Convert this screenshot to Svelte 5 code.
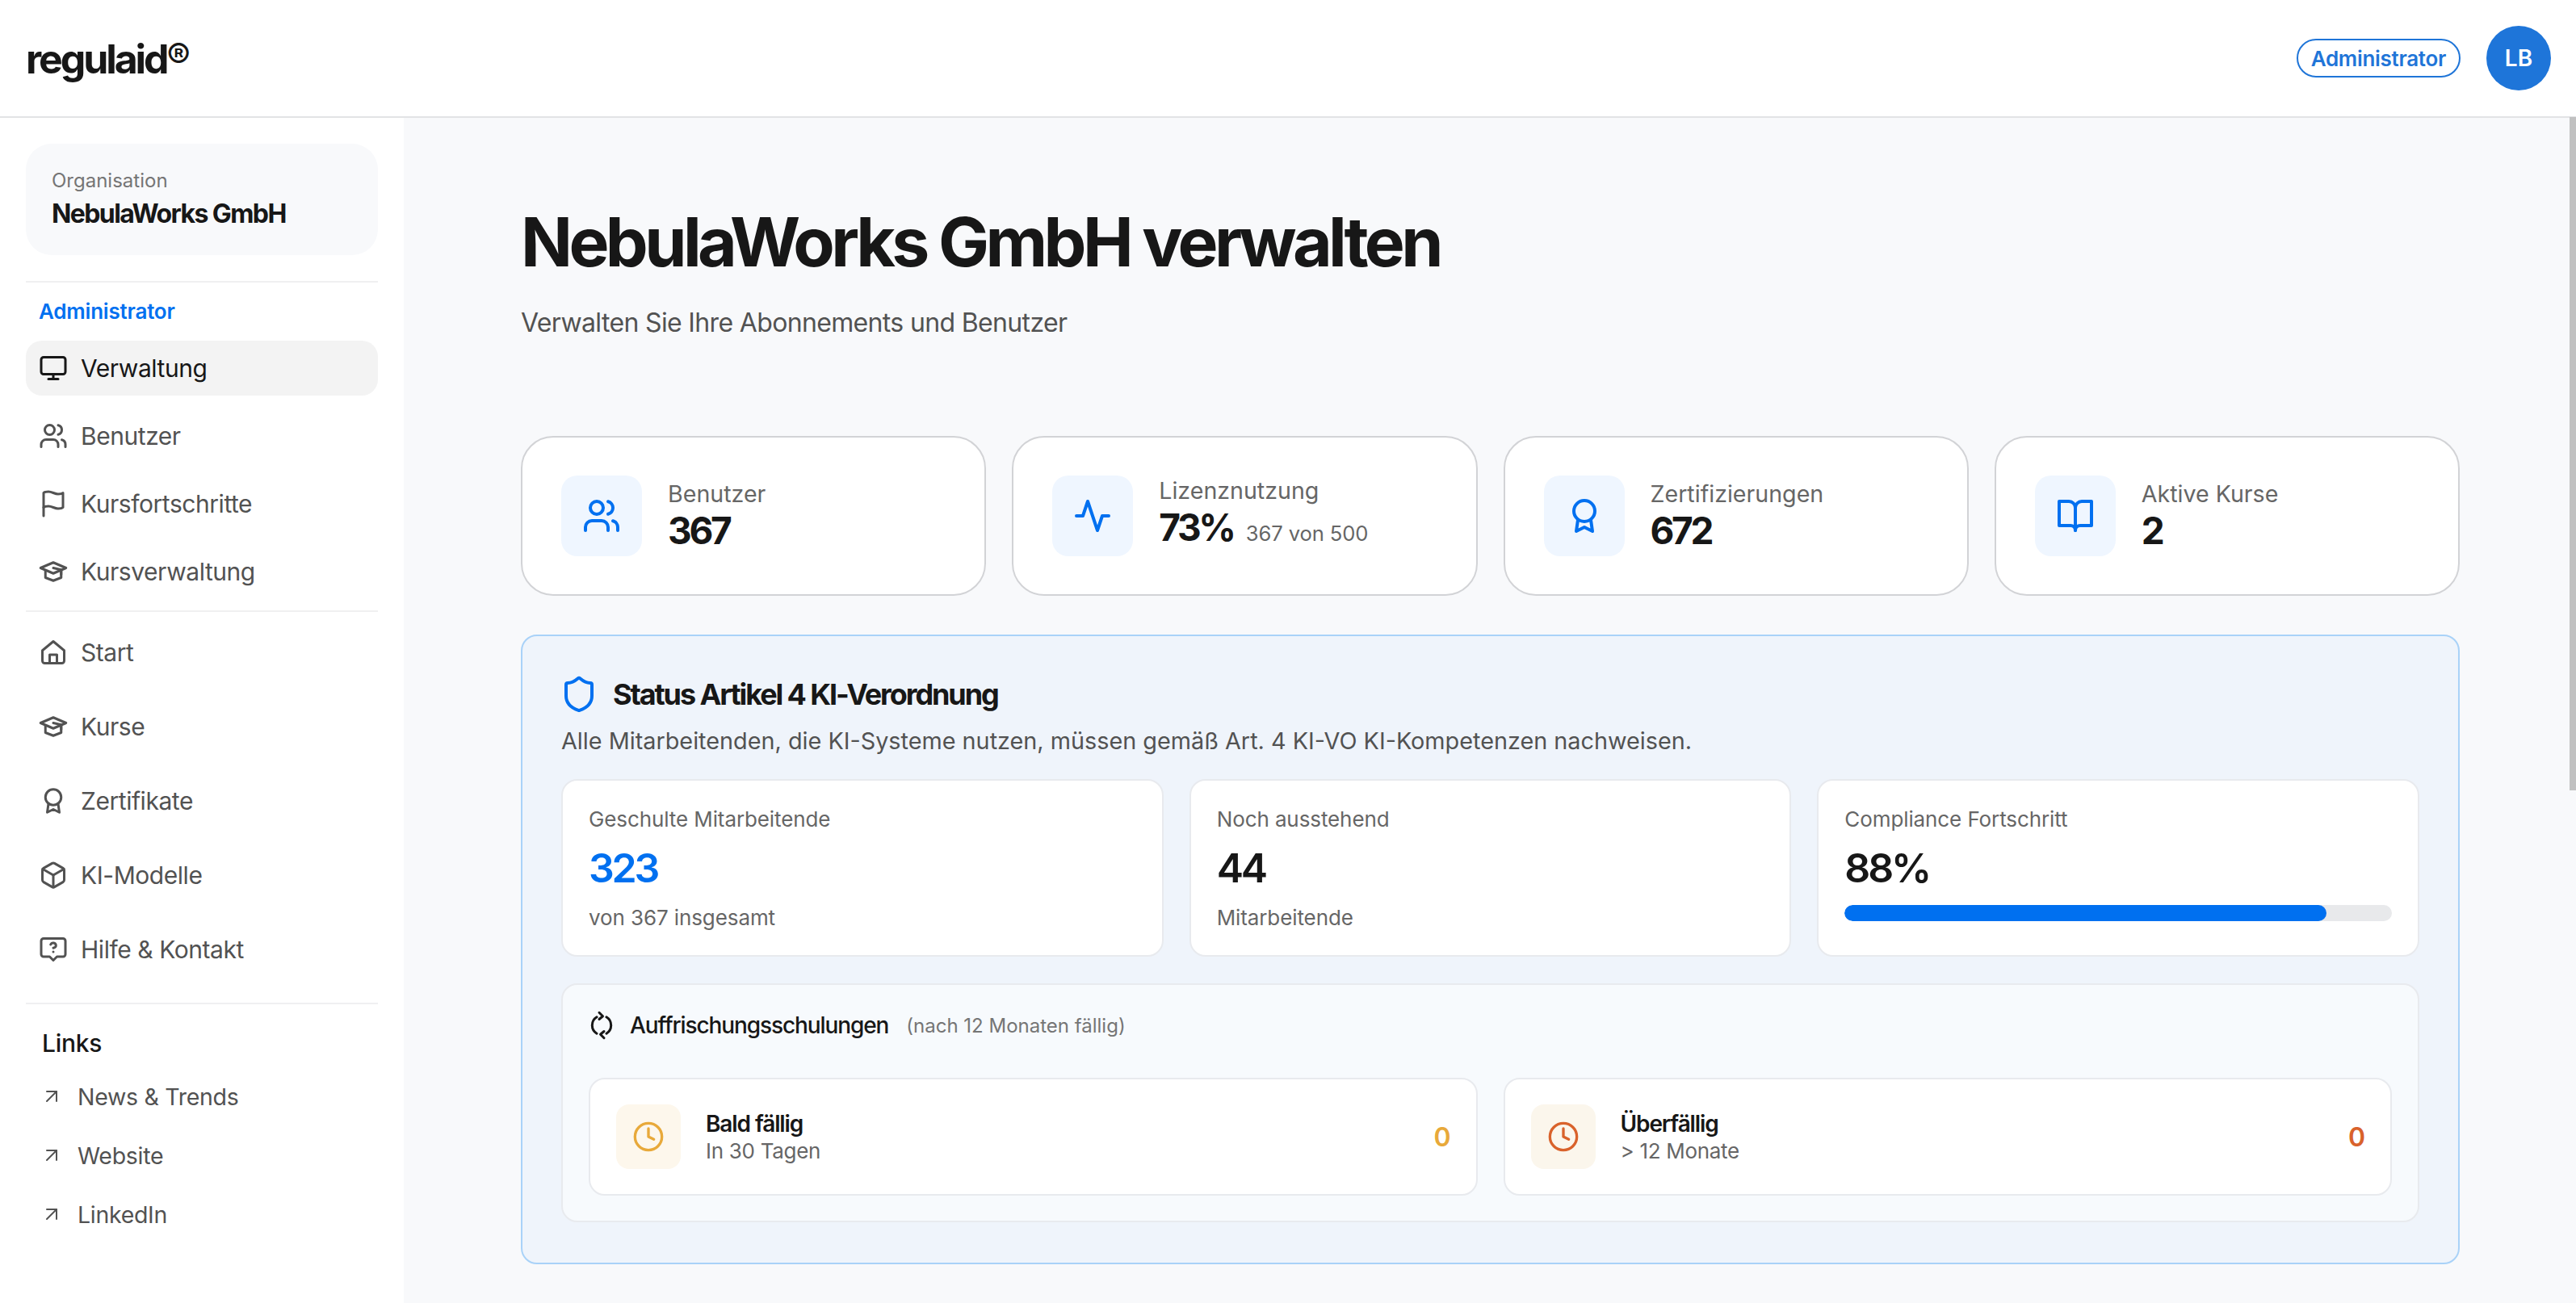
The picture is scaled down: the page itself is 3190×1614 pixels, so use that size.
<script>
  const icons = {
    monitor: ['M4 3h16a2 2 0 0 1 2 2v10a2 2 0 0 1-2 2H4a2 2 0 0 1-2-2V5a2 2 0 0 1 2-2z', 'M12 17v4', 'M8 21h8'],
    users: ['M16 21v-2a4 4 0 0 0-4-4H6a4 4 0 0 0-4 4v2', 'M13 7a4 4 0 1 1-8 0 4 4 0 0 1 8 0z', 'M22 21v-2a4 4 0 0 0-3-3.87', 'M16 3.13a4 4 0 0 1 0 7.75'],
    flag: ['M4 15s1-1 4-1 5 2 8 2 4-1 4-1V3s-1 1-4 1-5-2-8-2-4 1-4 1z', 'M4 22v-7'],
    cap: ['M12 4.5 22.5 9 12 13.5 1.5 9z', 'M5.5 11v6l6.5 2.5 6.5-2.5v-6', 'M12 9l6.5 1.5v4'],
    home: ['M3 10.5 12 3l9 7.5V19a2 2 0 0 1-2 2H5a2 2 0 0 1-2-2z', 'M9 21v-7h6v7'],
    award: ['M18.5 9a6.5 6.5 0 1 1-13 0 6.5 6.5 0 0 1 13 0z', 'M8 14.5 7 21.5l5-2.5 5 2.5-1-7'],
    box: ['M21 8a2 2 0 0 0-1-1.73l-7-4a2 2 0 0 0-2 0l-7 4A2 2 0 0 0 3 8v8a2 2 0 0 0 1 1.73l7 4a2 2 0 0 0 2 0l7-4A2 2 0 0 0 21 16Z', 'm3.3 7 8.7 5 8.7-5', 'M12 22V12'],
    help: ['M4 3h16a2 2 0 0 1 2 2v11a2 2 0 0 1-2 2h-5l-3 3-3-3H4a2 2 0 0 1-2-2V5a2 2 0 0 1 2-2z', 'M9.8 8a2.3 2.3 0 0 1 4.4.8c0 1.5-2.2 2-2.2 2', 'M12 14h.01'],
    arrow: ['M6 18 18 6', 'M6 6h12v12'],
    activity: ['M22 12h-4l-3 9L9 3l-3 9H2'],
    book: ['M2 3h6a4 4 0 0 1 4 4v14a3 3 0 0 0-3-3H2z', 'M22 3h-6a4 4 0 0 0-4 4v14a3 3 0 0 1 3-3h7z'],
    shield: ['M20 13c0 5-3.5 7.5-7.66 8.95a1 1 0 0 1-.67-.01C7.5 20.5 4 18 4 13V6a1 1 0 0 1 1-1c2 0 4.5-1.2 6.24-2.72a1.17 1.17 0 0 1 1.52 0C14.51 3.81 17 5 19 5a1 1 0 0 1 1 1z'],
    sync: ['M8 5.2A8 8 0 0 0 8 18.8', 'M16 18.8A8 8 0 0 0 16 5.2', 'M10 1.5 13 4.5 10 7', 'M14 22.5 11 19.5 14 17'],
    clock: ['M22 12a10 10 0 1 1-20 0 10 10 0 0 1 20 0z', 'M12 6v6l4 2']
  };

  const adminNav = [
    { label: 'Verwaltung', icon: 'monitor', active: true },
    { label: 'Benutzer', icon: 'users' },
    { label: 'Kursfortschritte', icon: 'flag' },
    { label: 'Kursverwaltung', icon: 'cap' }
  ];
  const mainNav = [
    { label: 'Start', icon: 'home' },
    { label: 'Kurse', icon: 'cap' },
    { label: 'Zertifikate', icon: 'award' },
    { label: 'KI-Modelle', icon: 'box' },
    { label: 'Hilfe & Kontakt', icon: 'help' }
  ];
  const links = ['News & Trends', 'Website', 'LinkedIn'];
  const stats = [
    { label: 'Benutzer', value: '367', icon: 'users' },
    { label: 'Lizenznutzung', value: '73%', note: '367 von 500', icon: 'activity' },
    { label: 'Zertifizierungen', value: '672', icon: 'award' },
    { label: 'Aktive Kurse', value: '2', icon: 'book' }
  ];
  const refreshers = [
    { title: 'Bald fällig', sub: 'In 30 Tagen', cls: 'amber' },
    { title: 'Überfällig', sub: '> 12 Monate', cls: 'red' }
  ];
</script>

{#snippet icon(name, size)}
  <svg width={size} height={size} viewBox="0 0 24 24" fill="none" stroke="currentColor" stroke-width="2" stroke-linecap="round" stroke-linejoin="round" aria-hidden="true">
    {#each icons[name] as d}<path {d} />{/each}
  </svg>
{/snippet}

<div class="shell">
  <header class="topbar">
    <div class="logo">regulaid<span class="reg">®</span></div>
    <div class="account">
      <span class="role">Administrator</span>
      <span class="avatar">LB</span>
    </div>
  </header>

  <div class="body">
    <aside class="sidebar">
      <div class="org">
        <div class="org-label">Organisation</div>
        <div class="org-name">NebulaWorks GmbH</div>
      </div>
      <hr class="rule first" />
      <div class="section-label">Administrator</div>
      <nav class="nav admin">
        {#each adminNav as item}
          <div class="nav-item" class:active={item.active}>
            {@render icon(item.icon, 36)}
            <span>{item.label}</span>
          </div>
        {/each}
      </nav>
      <hr class="rule second" />
      <nav class="nav primary">
        {#each mainNav as item}
          <div class="nav-item">
            {@render icon(item.icon, 36)}
            <span>{item.label}</span>
          </div>
        {/each}
      </nav>
      <hr class="rule third" />
      <div class="links-title">Links</div>
      <div class="links">
        {#each links as link}
          <div class="link">
            {@render icon('arrow', 24)}
            <span>{link}</span>
          </div>
        {/each}
      </div>
    </aside>

    <main class="main">
      <h1>NebulaWorks GmbH verwalten</h1>
      <p class="subtitle">Verwalten Sie Ihre Abonnements und Benutzer</p>

      <section class="stats">
        {#each stats as s}
          <div class="stat">
            <div class="stat-icon">{@render icon(s.icon, 48)}</div>
            <div class="stat-text">
              <div class="stat-label">{s.label}</div>
              <div class="stat-value">{s.value}{#if s.note}<small>{s.note}</small>{/if}</div>
            </div>
          </div>
        {/each}
      </section>

      <section class="panel">
        <div class="panel-head">
          {@render icon('shield', 48)}
          <h2>Status Artikel 4 KI-Verordnung</h2>
        </div>
        <p class="panel-desc">Alle Mitarbeitenden, die KI-Systeme nutzen, müssen gemäß Art. 4 KI-VO KI-Kompetenzen nachweisen.</p>

        <div class="metrics">
          <div class="metric">
            <div class="metric-label">Geschulte Mitarbeitende</div>
            <div class="metric-value blue">323</div>
            <div class="metric-note">von 367 insgesamt</div>
          </div>
          <div class="metric">
            <div class="metric-label">Noch ausstehend</div>
            <div class="metric-value">44</div>
            <div class="metric-note">Mitarbeitende</div>
          </div>
          <div class="metric">
            <div class="metric-label">Compliance Fortschritt</div>
            <div class="metric-value">88%</div>
            <div class="track"><div class="fill" style="width: 88%"></div></div>
          </div>
        </div>

        <div class="refresh">
          <div class="refresh-head">
            {@render icon('sync', 36)}
            <span class="refresh-title">Auffrischungsschulungen</span>
            <span class="refresh-note">(nach 12 Monaten fällig)</span>
          </div>
          <div class="refresh-grid">
            {#each refreshers as r}
              <div class="due {r.cls}">
                <div class="due-icon">{@render icon('clock', 40)}</div>
                <div class="due-text">
                  <div class="due-title">{r.title}</div>
                  <div class="due-sub">{r.sub}</div>
                </div>
                <div class="due-count">0</div>
              </div>
            {/each}
          </div>
        </div>
      </section>
    </main>
    <div class="scroll-thumb"></div>
  </div>
</div>

<style>
  :global(body) {
    margin: 0;
    background: #f8f9fb;
    font-family: Inter, "Liberation Sans", sans-serif;
    color: #171717;
    overflow: hidden;
  }

  .shell { height: 1614px; display: flex; flex-direction: column; }

  .topbar {
    height: 144px;
    flex-shrink: 0;
    box-sizing: content-box;
    background: #fff;
    border-bottom: 2px solid #e2e3e5;
    display: flex;
    align-items: center;
    justify-content: space-between;
    padding: 0 31px 0 32px;
  }
  .logo { font-size: 50px; font-weight: 700; letter-spacing: -3.1px; }
  .reg { font-weight: 500; font-size: 44px; letter-spacing: 0; vertical-align: 6px; }

  .account { display: flex; align-items: center; gap: 32px; }
  .role {
    height: 48px;
    box-sizing: border-box;
    padding: 0 16px;
    display: flex;
    align-items: center;
    border: 2px solid #1f75d8;
    border-radius: 24px;
    color: #1f75d8;
    font-size: 26px;
    font-weight: 600;
    letter-spacing: -0.3px;
  }
  .avatar {
    width: 80px;
    height: 80px;
    border-radius: 50%;
    background: #1e75d9;
    color: #fff;
    display: flex;
    align-items: center;
    justify-content: center;
    font-size: 28px;
    font-weight: 600;
  }

  .body { flex: 1; min-height: 0; display: flex; position: relative; }

  .sidebar {
    width: 500px;
    flex-shrink: 0;
    box-sizing: border-box;
    background: #fff;
    padding: 32px 32px 0;
  }
  .org {
    height: 138px;
    box-sizing: border-box;
    background: #f8f9fb;
    border-radius: 32px;
    padding: 28px 32px;
  }
  .org-label { font-size: 24px; line-height: 36px; color: #757575; }
  .org-name { font-size: 32px; line-height: 46px; font-weight: 700; letter-spacing: -1.6px; }

  .rule { border: 0; height: 2px; background: #f0f0f1; margin: 0; }
  .rule.first { margin-top: 32px; }
  .rule.second { margin-top: 14px; }
  .rule.third { margin-top: 32px; }

  .section-label {
    margin-top: 18px;
    padding-left: 16px;
    font-size: 26px;
    line-height: 36px;
    font-weight: 600;
    letter-spacing: -0.2px;
    color: #0070f0;
  }

  .nav { display: flex; flex-direction: column; }
  .nav.admin { gap: 16px; margin-top: 18px; }
  .nav.primary { gap: 24px; margin-top: 16px; }
  .nav-item {
    height: 68px;
    display: flex;
    align-items: center;
    gap: 16px;
    padding: 0 16px;
    border-radius: 20px;
    font-size: 30px;
    letter-spacing: -0.45px;
    color: #525252;
  }
  .nav-item.active { background: #f3f3f3; color: #171717; }

  .links-title { margin-top: 30px; padding-left: 20px; font-size: 30px; line-height: 36px; font-weight: 500; letter-spacing: -0.3px; }
  .links { display: flex; flex-direction: column; gap: 29px; margin-top: 26px; }
  .link {
    height: 44px;
    display: flex;
    align-items: center;
    gap: 20px;
    padding-left: 20px;
    font-size: 28.5px;
    letter-spacing: -0.3px;
    color: #525252;
  }

  .main {
    flex: 1;
    min-width: 0;
    overflow: hidden;
    padding: 0 144px 0 145px;
  }
  .scroll-thumb {
    position: absolute;
    top: -1px;
    right: 0;
    width: 8px;
    height: 834px;
    background: #c1c1c1;
  }

  h1 {
    margin: 104px 0 0;
    font-size: 84px;
    line-height: 100px;
    font-weight: 700;
    letter-spacing: -4.6px;
  }
  .subtitle { margin: 26px 0 0; font-size: 32px; line-height: 48px; letter-spacing: -0.65px; color: #525252; }

  .stats { display: grid; grid-template-columns: repeat(4, 1fr); gap: 32px; margin-top: 116px; }
  .stat {
    box-sizing: border-box;
    height: 198px;
    display: flex;
    align-items: center;
    gap: 32px;
    padding: 0 48px;
    background: #fff;
    border: 2px solid #d2d3d6;
    border-radius: 40px;
  }
  .stat-icon {
    width: 100px;
    height: 100px;
    flex-shrink: 0;
    display: flex;
    align-items: center;
    justify-content: center;
    border-radius: 20px;
    background: #eff6ff;
    color: #0070f0;
  }
  .stat-text { padding-bottom: 2px; }
  .stat-label { font-size: 28.6px; line-height: 38px; color: #666; }
  .stat-value { font-size: 46px; line-height: 52px; font-weight: 700; letter-spacing: -3.3px; }
  .stat-value small { margin-left: 15px; font-size: 25.6px; font-weight: 400; letter-spacing: -0.1px; color: #666; }

  .panel {
    box-sizing: border-box;
    height: 780px;
    margin-top: 48px;
    padding: 48px;
    background: #eff4fb;
    border: 2px solid #a9d2f8;
    border-radius: 20px;
  }
  .panel-head { display: flex; align-items: center; gap: 18px; color: #0070f0; }
  .panel-head svg { margin-left: -2px; }
  h2 { margin: 0; font-size: 36px; font-weight: 700; letter-spacing: -2.1px; color: #171717; }
  .panel-desc { margin: 14px 0 0; font-size: 28.8px; line-height: 40px; color: #525252; }

  .metrics { display: grid; grid-template-columns: repeat(3, 1fr); gap: 32px; margin-top: 27px; }
  .metric {
    box-sizing: border-box;
    height: 220px;
    padding: 30px 32px;
    background: #fff;
    border: 2px solid #e8eaee;
    border-radius: 20px;
  }
  .metric-label { font-size: 26px; line-height: 36px; letter-spacing: -0.1px; color: #666; }
  .metric-value { margin-top: 12px; font-size: 50px; line-height: 60px; font-weight: 600; letter-spacing: -3.2px; }
  .metric-value.blue { color: #0070f0; }
  .metric-note { margin-top: 14px; font-size: 26px; line-height: 36px; letter-spacing: -0.1px; color: #666; }
  .track { height: 20px; margin-top: 16px; border-radius: 10px; background: #e8e9eb; overflow: hidden; }
  .fill { height: 100%; background: #0070f0; border-radius: 10px; }

  .refresh {
    box-sizing: border-box;
    height: 296px;
    margin-top: 33px;
    padding: 32px;
    background: #f7fafd;
    border: 2px solid #e8eaee;
    border-radius: 20px;
  }
  .refresh-head { display: flex; align-items: center; height: 36px; color: #171717; }
  .refresh-head svg { margin-left: -2px; }
  .refresh-title { margin-left: 17px; font-size: 28px; font-weight: 500; letter-spacing: -1.1px; }
  .refresh-note { margin-left: 22px; font-size: 24px; color: #757575; }

  .refresh-grid { display: grid; grid-template-columns: repeat(2, 1fr); gap: 32px; margin-top: 47px; }
  .due {
    box-sizing: border-box;
    height: 146px;
    display: flex;
    align-items: center;
    gap: 31px;
    padding: 0 32px;
    background: #fff;
    border: 2px solid #e8eaee;
    border-radius: 20px;
  }
  .due-icon {
    width: 80px;
    height: 80px;
    flex-shrink: 0;
    display: flex;
    align-items: center;
    justify-content: center;
    border-radius: 16px;
  }
  .due.amber .due-icon { background: #fdf7ec; color: #e8a93a; }
  .due.red .due-icon { background: #fbf6ec; color: #d9622b; }
  .due-text { flex: 1; }
  .due-title { font-size: 28px; line-height: 36px; font-weight: 600; letter-spacing: -1.1px; }
  .due-sub { font-size: 26px; line-height: 32px; letter-spacing: -0.3px; color: #666; }
  .due-count { font-size: 32px; font-weight: 600; margin-right: -1px; }
  .due.amber .due-count { color: #e8a93a; }
  .due.red .due-count { color: #d9622b; }
</style>
